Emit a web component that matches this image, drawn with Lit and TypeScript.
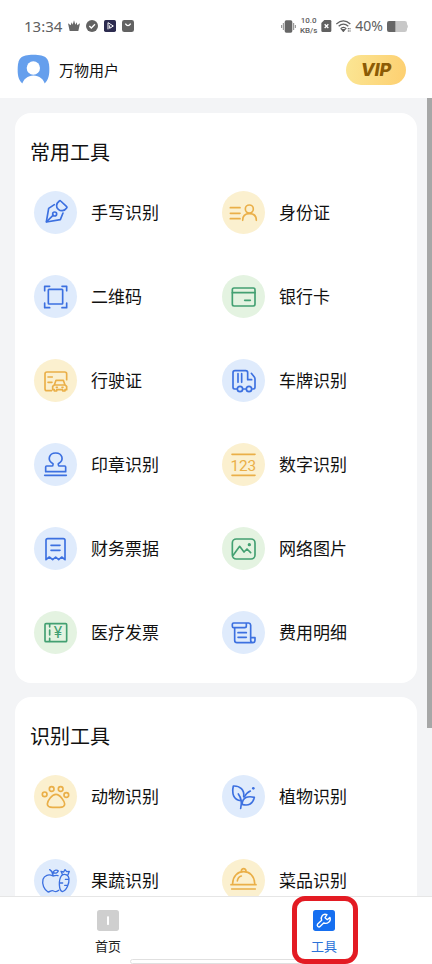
import { LitElement, html, svg, css } from "lit";
import type { SVGTemplateResult } from "lit";
import { customElement, property } from "lit/decorators.js";

type Tone = "blue" | "gold" | "green";
interface Tool {
  label: string;
  icon: string;
  tone: Tone;
}

// Tool glyphs share a 129-unit square that covers the whole round badge.
const glyphs: Record<string, SVGTemplateResult> = {
  pen: svg`<path d="M61 41 44 52 37 93 79 86 87 66"/><path d="M76 30Q78 28 80 30L98 47Q100 49 98 51C91 61 80 61 73 55 65 48 66 38 76 30Z"/><circle cx="62" cy="69" r="6"/><path d="M38 92 57 73"/>`,
  scan: svg`<path d="M32 47V34H47M84 34H98V47M98 84V98H84M47 98H32V84"/><rect x="43" y="43" width="43" height="44" rx="2"/>`,
  person: svg`<path d="M25 50H54M25 67H54M25 83H54"/><circle cx="82" cy="54" r="12"/><path d="M62 88C62 74 70 68 82 68S103 74 103 88"/>`,
  card: svg`<rect x="31" y="39" width="68" height="54" rx="5"/><path d="M31 53H99M68 76H85"/>`,
  license: svg`<path d="M52 95H39A6 6 0 0 1 33 89V45A6 6 0 0 1 39 39H92A6 6 0 0 1 98 45V62M42 54H55M42 70H54"/><path d="M61 78 66 64H88L93 78M61 78 56 82V92H61V96H68V92H86V96H93V92H98V82L93 78ZM67 85H70M84 85H87"/>`,
  truck: svg`<path d="M44 90H38A5 5 0 0 1 33 85V41A6 6 0 0 1 39 35H71A6 6 0 0 1 77 41V62H89M88 43 97 54Q99 57 99 60V85A5 5 0 0 1 94 90H92M64 90H71M48 44V70M59 44V70"/><circle cx="54" cy="90" r="8"/><circle cx="81" cy="90" r="8"/>`,
  stamp: svg`<path d="M35 86V72Q35 69 38 69H53Q57 69 57 65V62C38 52 45 30 65 30S92 52 73 62V65Q73 69 77 69H92Q95 69 95 72V86ZM32 97H97"/>`,
  digits: svg`<path d="M30 34H99M30 97H99"/><text class="num" x="64" y="83" text-anchor="middle">123</text>`,
  receipt: svg`<path d="M36 98V40A5 5 0 0 1 41 35H88A5 5 0 0 1 93 40V98L83 90 74 98 65 90 56 98 46 90ZM51 55H78M51 70H78"/>`,
  bill: svg`<rect x="33" y="38" width="65" height="54" rx="3"/><path d="M47 39V48M47 57V72M47 82V91"/><text class="yen" x="72" y="82" text-anchor="middle">¥</text>`,
  picture: svg`<rect x="31" y="36" width="68" height="60" rx="12"/><path d="M34 84 53 58 66 75 75 66 86 77"/><circle class="dot" cx="82" cy="53" r="5"/>`,
  scroll: svg`<path d="M38 50V88A7 7 0 0 0 45 95H92A7 7 0 0 0 99 88V80H86V88A7 7 0 0 0 92 95M86 80V42A7 7 0 0 0 80 36H35Q31 36 31 40V46Q31 50 35 50H68Q73 50 73 45V37M48 65H73M48 79H73"/>`,
  paw: svg`<circle cx="32" cy="58" r="7"/><circle cx="53" cy="42" r="7"/><circle cx="80" cy="42" r="7"/><circle cx="97" cy="60" r="7"/><path d="M66 58C54 58 40 77 40 87S49 97 56 97H77C86 97 92 95 92 87S78 58 66 58Z"/>`,
  leaf: svg`<path d="M57 77C34 75 29 55 34 33 54 32 68 45 65 65"/><path d="M60 88C62 67 77 62 97 67 93 86 80 94 60 88Z"/><path d="M49 57C59 70 60 84 56 100M67 66C72 56 78 51 85 48"/><circle class="dot" cx="94" cy="40" r="4"/>`,
  produce: svg`<g class="fine"><path d="M72 50C66 48 61 50 57 51 44 44 31 49 27 61 23 76 31 93 42 99 50 98 52 92 59 96 65 99 70 98 74 94M57 49C57 41 52 35 47 32M57 40C62 32 69 32 73 36 70 43 64 44 57 40"/><path d="M83 49C94 42 104 49 105 59 106 73 98 95 85 98 74 94 73 62 83 49M85 46 81 37 89 39 93 32 98 38 106 37 102 47M94 61H103M77 72H86M92 79H99"/></g>`,
  cloche: svg`<path d="M32 73C33 51 47 38 65 38S97 51 98 73M27 77H102M29 90H100M46 66C47 58 51 53 58 51M58 38C57 26 73 26 72 38"/>`,
};

@customElement("tool-card")
class ToolCard extends LitElement {
  @property() heading = "";
  @property({ attribute: false }) tools: Tool[] = [];

  static styles = css`
    :host {
      display: block;
      background: #fff;
      border-radius: 16px;
      padding: 28px 7px 29px 15px;
    }
    .title {
      margin: 0 0 26px;
      font-size: 20px;
      line-height: 24px;
      font-weight: 400;
      color: #111;
    }
    .grid {
      display: grid;
      grid-template-columns: 1fr 1fr;
      row-gap: 41px;
      margin: 0;
      padding: 0 0 0 4px;
      list-style: none;
    }
    .tool {
      display: flex;
      align-items: center;
      gap: 14px;
      width: 100%;
      padding: 0;
      border: 0;
      background: none;
      font: inherit;
      font-size: 17px;
      line-height: 24px;
      color: #111;
      text-align: left;
    }
    .badge {
      width: 43px;
      height: 43px;
      flex: none;
      border-radius: 50%;
      fill: none;
      stroke: currentColor;
      stroke-width: 5;
      stroke-linecap: round;
      stroke-linejoin: round;
    }
    .blue { color: #3c70e0; background: #dfebfc; }
    .gold { color: #eaaf48; background: #fbf0cf; }
    .green { color: #43a072; background: #e4f3e1; }
    .dot, .num, .yen { fill: currentColor; stroke: none; }
    .num { font: 46px Roboto, sans-serif; }
    .yen { font: 48px Roboto, sans-serif; }
    .fine { stroke-width: 4; }
  `;

  render() {
    return html`
      <h2 class="title">${this.heading}</h2>
      <ul class="grid">
        ${this.tools.map(
          (t) => html`<li>
            <button class="tool" type="button">
              <svg class="badge ${t.tone}" viewBox="0 0 129 129" aria-hidden="true">${glyphs[t.icon]}</svg>
              <span>${t.label}</span>
            </button>
          </li>`
        )}
      </ul>
    `;
  }
}

const common: Tool[] = [
  { label: "手写识别", icon: "pen", tone: "blue" },
  { label: "身份证", icon: "person", tone: "gold" },
  { label: "二维码", icon: "scan", tone: "blue" },
  { label: "银行卡", icon: "card", tone: "green" },
  { label: "行驶证", icon: "license", tone: "gold" },
  { label: "车牌识别", icon: "truck", tone: "blue" },
  { label: "印章识别", icon: "stamp", tone: "blue" },
  { label: "数字识别", icon: "digits", tone: "gold" },
  { label: "财务票据", icon: "receipt", tone: "blue" },
  { label: "网络图片", icon: "picture", tone: "green" },
  { label: "医疗发票", icon: "bill", tone: "green" },
  { label: "费用明细", icon: "scroll", tone: "blue" },
];

const recognise: Tool[] = [
  { label: "动物识别", icon: "paw", tone: "gold" },
  { label: "植物识别", icon: "leaf", tone: "blue" },
  { label: "果蔬识别", icon: "produce", tone: "blue" },
  { label: "菜品识别", icon: "cloche", tone: "gold" },
];

@customElement("app-root")
class AppRoot extends LitElement {
  static styles = css`
    :host {
      display: flex;
      flex-direction: column;
      height: 100vh;
      overflow: hidden;
      background: #f3f4f6;
      font-family: "Noto Sans", "Noto Sans CJK SC", sans-serif;
      color: #111;
    }
    .top {
      flex: none;
      background: #fff;
      padding: 14px 24px 12px;
    }
    .status {
      display: flex;
      align-items: center;
      height: 24px;
      gap: 6px;
      font-size: 15px;
      line-height: 24px;
      color: #606060;
    }
    .status svg { flex: none; }
    .spacer { flex: 1; }
    .rate {
      display: flex;
      flex-direction: column;
      font-family: Roboto, sans-serif;
      font-size: 8px;
      line-height: 10px;
      text-align: center;
      font-weight: 500;
    }
    .power {
      font-size: 14px;
    }
    .right {
      display: flex;
      align-items: center;
      gap: 4px;
    }
    .user {
      display: flex;
      align-items: center;
      gap: 9px;
      margin: 16px 2px 0 -7px;
      height: 32px;
    }
    .name {
      flex: 1;
      font-size: 15px;
      line-height: 24px;
    }
    .vip {
      width: 60px;
      height: 30px;
      padding: 0;
      border: 0;
      border-radius: 15px;
      background: linear-gradient(100deg, #fbe694, #fdcf70);
      font: italic 800 18px/30px Inter, sans-serif;
      color: #8c5b05;
    }
    .scroll {
      flex: 1;
      min-height: 0;
      display: flex;
      overflow: hidden;
    }
    .cards {
      flex: 1;
      display: flex;
      flex-direction: column;
      gap: 14px;
      padding: 15px 10px 15px 15px;
    }
    .thumb {
      width: 5px;
      height: 79%;
      background: #a6a7a7;
    }
    .tabs {
      flex: none;
      display: flex;
      height: 67px;
      background: #fff;
      border-top: 1px solid #e6e6e6;
      position: relative;
    }
    .tab {
      flex: 1;
      display: flex;
      flex-direction: column;
      align-items: center;
      gap: 5px;
      padding: 13px 0 0;
      text-decoration: none;
      color: #222;
      font-size: 13px;
      line-height: 20px;
      position: relative;
    }
    .active { color: #2b72d8; }
    .frame {
      position: absolute;
      top: -1px;
      left: 50%;
      width: 66px;
      height: 68px;
      margin-left: -32px;
      box-sizing: border-box;
      border: 5px solid #e31b23;
      border-radius: 13px;
    }
    .handle {
      position: absolute;
      left: 30%;
      right: 30%;
      bottom: 0;
      height: 3px;
      border: 1px solid #e0e0e0;
      border-radius: 3px;
      background: #fff;
    }
  `;

  private statusBar() {
    return html`<div class="status">
      <span>13:34</span>
      <svg width="12" height="12" viewBox="0 0 36 36" fill="#666"><path d="M0 10 8 16 11 7 14 14 18 1 22 14 26 7 28 16 36 10 31 33H5Z"/></svg>
      <svg width="12" height="12" viewBox="0 0 36 36"><circle cx="18" cy="18" r="18" fill="#626262"/><path d="m10 18 6 6 11-11" fill="none" stroke="#fff" stroke-width="4"/></svg>
      <svg width="12" height="12" viewBox="0 0 36 36"><rect width="36" height="36" rx="5" fill="#2c2b4f"/><path d="M12 28V8L28 18 17 25V16" fill="none" stroke="#fff" stroke-width="3"/></svg>
      <svg width="12" height="12" viewBox="0 0 36 36"><rect width="36" height="36" rx="7" fill="#626262"/><path d="M10 11Q18 23 26 11" fill="none" stroke="#fff" stroke-width="4"/></svg>
      <span class="spacer"></span>
      <div class="right">
        <svg width="15" height="13" viewBox="0 0 45 39"><rect x="11" y="1" width="23" height="37" rx="5" fill="#666"/><path d="M7 9V30M38 9V30M2 15V24M43 15V24" stroke="#888" stroke-width="3"/></svg>
        <div class="rate"><span>10.0</span><span>KB/s</span></div>
        <svg width="11" height="12" viewBox="0 0 33 36"><path d="M10 0H27Q31 0 31 4V32Q31 36 27 36H5Q1 36 1 32V9Z" fill="#606060"/><path d="m11 13 11 11m0-11L11 24" stroke="#fff" stroke-width="4"/></svg>
        <svg width="15" height="12" viewBox="0 0 45 36" fill="none" stroke="#606060" stroke-width="4"><path d="M1 12Q22-7 43 12M8 19Q22 6 37 19M14 26Q22 18 31 26"/><path d="M18 29 22 34 26 29Z" fill="#606060"/><path d="M37 24V36M42 24V36" stroke-width="3" stroke-dasharray="4 3"/></svg>
        <span class="power">40%</span>
        <svg width="21" height="11" viewBox="0 0 63 33"><rect width="60" height="33" rx="7" fill="#c8c8c8"/><path d="M7 0H25V33H7Q0 33 0 26V7Q0 0 7 0Z" fill="#666"/><path d="M60 10Q65 16 60 23Z" fill="#c8c8c8"/></svg>
      </div>
    </div>`;
  }

  render() {
    return html`
      <header class="top">
        ${this.statusBar()}
        <div class="user">
          <svg width="33" height="32" viewBox="0 0 99 96" aria-hidden="true">
            <path d="M49 2C88 2 97 12 97 48 97 68 92 80 82 89H17C6 80 2 68 2 48 2 12 11 2 49 2Z" fill="#659fed"/>
            <circle cx="49" cy="42" r="20" fill="#fff"/>
            <path d="M14 96C20 54 79 54 85 96Z" fill="#fff"/>
          </svg>
          <span class="name">万物用户</span>
          <button class="vip" type="button">VIP</button>
        </div>
      </header>
      <main class="scroll">
        <div class="cards">
          <tool-card heading="常用工具" .tools=${common}></tool-card>
          <tool-card heading="识别工具" .tools=${recognise}></tool-card>
        </div>
        <div class="thumb"></div>
      </main>
      <nav class="tabs">
        <div class="handle"></div>
        <a class="tab" href="#home">
          <svg width="22" height="21" viewBox="0 0 66 63" aria-hidden="true"><rect width="66" height="63" rx="8" fill="#cfcfcf"/><rect x="30" y="19" width="6" height="26" rx="2" fill="#fff"/></svg>
          <span>首页</span>
        </a>
        <a class="tab active" href="#tools">
          <svg width="22" height="21" viewBox="0 0 66 63" aria-hidden="true"><rect width="66" height="63" rx="8" fill="#166ff0"/><path d="M42 14C30 9 22 20 26 31L14 42C10 47 17 54 22 49L32 39C43 43 55 35 51 22L43 29 36 23Z" fill="none" stroke="#fff" stroke-width="4" stroke-linejoin="round"/></svg>
          <span>工具</span>
          <span class="frame"></span>
        </a>
      </nav>
    `;
  }
}
